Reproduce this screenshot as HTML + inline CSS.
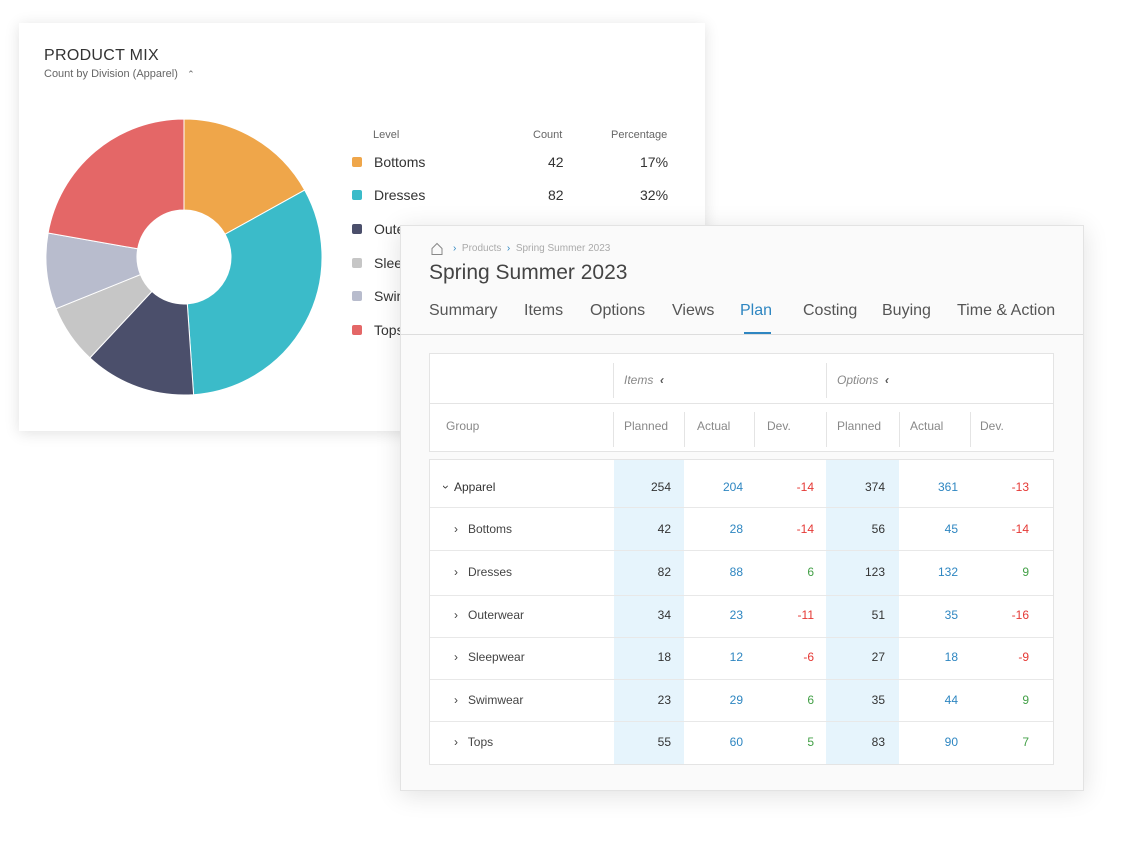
<!DOCTYPE html>
<html><head><meta charset="utf-8"><style>
*{box-sizing:border-box;margin:0;padding:0}
body{width:1146px;height:854px;background:#fff;font-family:"Liberation Sans",sans-serif;position:relative;overflow:hidden;color:#444}
.card1{position:absolute;left:19px;top:23px;width:686px;height:408px;background:#fff;box-shadow:0 2px 14px rgba(0,0,0,.12)}
.abs{position:absolute;white-space:nowrap}
.panel{position:absolute;left:400px;top:225px;width:684px;height:566px;background:#fafafa;border:1px solid #e3e3e3;box-shadow:0 4px 24px rgba(0,0,0,.12)}
.tab{position:absolute;top:76px;font-size:16px;color:#555}
.hdr{position:absolute;left:28px;top:127px;width:625px;height:99px;background:#fff;border:1px solid #e4e4e4}
.body{position:absolute;left:28px;top:233px;width:625px;height:306px;background:#fff;border:1px solid #e4e4e4}
.vl{position:absolute;width:1px;background:#e4e4e4}
.hc{position:absolute;font-size:12px;color:#888}
.row{position:absolute;left:0;width:623px;border-top:1px solid #e8e8e8}
.num{position:absolute;font-size:12px;text-align:right;width:60px}
.p{color:#333}.a{color:#2e86c1}.n{color:#e53935}.g{color:#43a047}
.lbl{position:absolute;font-size:12px;color:#444}
</style></head><body>
<div class="card1">
 <div class="abs" style="left:25px;top:24px;font-size:16px;color:#333;letter-spacing:.3px">PRODUCT MIX</div>
 <div class="abs" style="left:25px;top:45px;font-size:11px;color:#666">Count by Division (Apparel) &nbsp;&nbsp;<span style="font-size:9px">⌃</span></div>
 <svg class="abs" style="left:-19px;top:-23px" width="340" height="420">
  <g stroke="#fff" stroke-width="1">
  <path d="M184 119 A138 138 0 0 1 304.7 190.1 L225.1 234.2 A47 47 0 0 0 184 210Z" fill="#efa64a"/>
  <path d="M304.7 190.1 A138 138 0 0 1 193.6 394.7 L187.3 303.9 A47 47 0 0 0 225.1 234.2Z" fill="#3bbbc9"/>
  <path d="M193.6 394.7 A138 138 0 0 1 89.9 357.9 L151.9 291.4 A47 47 0 0 0 187.3 303.9Z" fill="#4b4f6b"/>
  <path d="M89.9 357.9 A138 138 0 0 1 56 308.7 L140.4 274.6 A47 47 0 0 0 151.9 291.4Z" fill="#c6c6c6"/>
  <path d="M56 308.7 A138 138 0 0 1 48.1 233 L137.7 248.8 A47 47 0 0 0 140.4 274.6Z" fill="#b8bccd"/>
  <path d="M48.1 233 A138 138 0 0 1 184 119 L184 210 A47 47 0 0 0 137.7 248.8Z" fill="#e46767"/>
  </g>
 </svg>
 <div class="abs" style="left:354px;top:106px;font-size:11px;color:#666">Level</div>
 <div class="abs" style="left:514px;top:106px;font-size:11px;color:#666">Count</div>
 <div class="abs" style="left:592px;top:106px;font-size:11px;color:#666">Percentage</div>
 <div class="abs" style="left:333px;top:134px;width:10px;height:10px;background:#efa64a;border-radius:2px"></div>
 <div class="abs" style="left:355px;top:131px;font-size:14px;color:#333">Bottoms</div>
 <div class="abs" style="left:529px;top:131px;font-size:14px;color:#333">42</div>
 <div class="abs" style="left:621px;top:131px;font-size:14px;color:#333">17%</div>
 <div class="abs" style="left:333px;top:167px;width:10px;height:10px;background:#3bbbc9;border-radius:2px"></div>
 <div class="abs" style="left:355px;top:164px;font-size:14px;color:#333">Dresses</div>
 <div class="abs" style="left:529px;top:164px;font-size:14px;color:#333">82</div>
 <div class="abs" style="left:621px;top:164px;font-size:14px;color:#333">32%</div>
 <div class="abs" style="left:333px;top:201px;width:10px;height:10px;background:#4b4f6b;border-radius:2px"></div>
 <div class="abs" style="left:355px;top:198px;font-size:14px;color:#333">Outerwear</div>
 <div class="abs" style="left:333px;top:235px;width:10px;height:10px;background:#c6c6c6;border-radius:2px"></div>
 <div class="abs" style="left:355px;top:232px;font-size:14px;color:#333">Sleepwear</div>
 <div class="abs" style="left:333px;top:268px;width:10px;height:10px;background:#b8bccd;border-radius:2px"></div>
 <div class="abs" style="left:355px;top:265px;font-size:14px;color:#333">Swimwear</div>
 <div class="abs" style="left:333px;top:302px;width:10px;height:10px;background:#e46767;border-radius:2px"></div>
 <div class="abs" style="left:355px;top:299px;font-size:14px;color:#333">Tops</div>
</div>

<div class="panel">
 <svg class="abs" style="left:29px;top:16px" width="14" height="14" viewBox="0 0 14 14"><path d="M2 6.5 L7 1.5 L12 6.5 V12.5 H2Z" fill="none" stroke="#888" stroke-width="1"/></svg>
 <div class="abs" style="left:52px;top:17px;font-size:10px;color:#aaa"><span style="color:#2e86c1">›</span>&nbsp; Products &nbsp;<span style="color:#2e86c1">›</span>&nbsp; Spring Summer 2023</div>
 <div class="abs" style="left:28px;top:35px;font-size:21px;color:#444">Spring Summer 2023</div>
 <div class="tab" style="left:28px">Summary</div>
 <div class="tab" style="left:123px">Items</div>
 <div class="tab" style="left:189px">Options</div>
 <div class="tab" style="left:271px">Views</div>
 <div class="tab" style="left:339px;color:#2e86c1">Plan</div>
 <div class="tab" style="left:402px">Costing</div>
 <div class="tab" style="left:481px">Buying</div>
 <div class="tab" style="left:556px">Time &amp; Action</div>
 <div class="abs" style="left:343px;top:106px;width:27px;height:3px;background:#2e86c1"></div>
 <div class="abs" style="left:0;top:108px;width:682px;height:1px;background:#ddd"></div>

 <div class="hdr">
  <div class="abs" style="left:0;top:49px;width:623px;height:1px;background:#e4e4e4"></div>
  <div class="vl" style="left:183px;top:9px;height:35px"></div>
  <div class="vl" style="left:396px;top:9px;height:35px"></div>
  <div class="hc" style="left:194px;top:19px;font-style:italic">Items &nbsp;<b style="color:#555">‹</b></div>
  <div class="hc" style="left:407px;top:19px;font-style:italic">Options &nbsp;<b style="color:#555">‹</b></div>
  <div class="vl" style="left:183px;top:58px;height:35px"></div>
  <div class="vl" style="left:254px;top:58px;height:35px"></div>
  <div class="vl" style="left:324px;top:58px;height:35px"></div>
  <div class="vl" style="left:396px;top:58px;height:35px"></div>
  <div class="vl" style="left:469px;top:58px;height:35px"></div>
  <div class="vl" style="left:540px;top:58px;height:35px"></div>
  <div class="hc" style="left:16px;top:65px">Group</div>
  <div class="hc" style="left:194px;top:65px">Planned</div>
  <div class="hc" style="left:267px;top:65px">Actual</div>
  <div class="hc" style="left:337px;top:65px">Dev.</div>
  <div class="hc" style="left:407px;top:65px">Planned</div>
  <div class="hc" style="left:480px;top:65px">Actual</div>
  <div class="hc" style="left:550px;top:65px">Dev.</div>
 </div>

 <div class="body">
  <div class="abs" style="left:184px;top:0;width:70px;height:304px;background:#e6f4fc"></div>
  <div class="abs" style="left:396px;top:0;width:73px;height:304px;background:#e6f4fc"></div>
  <div class="lbl" style="left:14px;top:20px;color:#333"><span style="display:inline-block;transform:rotate(90deg);margin-right:6px">›</span>Apparel</div>
  <div class="num p" style="left:181px;top:20px">254</div><div class="num a" style="left:253px;top:20px">204</div><div class="num n" style="left:324px;top:20px">-14</div>
  <div class="num p" style="left:395px;top:20px">374</div><div class="num a" style="left:468px;top:20px">361</div><div class="num n" style="left:539px;top:20px">-13</div>

  <div class="row" style="top:47px"></div>
  <div class="lbl" style="left:24px;top:62px">›&nbsp;&nbsp; Bottoms</div>
  <div class="num p" style="left:181px;top:62px">42</div><div class="num a" style="left:253px;top:62px">28</div><div class="num n" style="left:324px;top:62px">-14</div>
  <div class="num p" style="left:395px;top:62px">56</div><div class="num a" style="left:468px;top:62px">45</div><div class="num n" style="left:539px;top:62px">-14</div>

  <div class="row" style="top:90px"></div>
  <div class="lbl" style="left:24px;top:105px">›&nbsp;&nbsp; Dresses</div>
  <div class="num p" style="left:181px;top:105px">82</div><div class="num a" style="left:253px;top:105px">88</div><div class="num g" style="left:324px;top:105px">6</div>
  <div class="num p" style="left:395px;top:105px">123</div><div class="num a" style="left:468px;top:105px">132</div><div class="num g" style="left:539px;top:105px">9</div>

  <div class="row" style="top:135px"></div>
  <div class="lbl" style="left:24px;top:148px">›&nbsp;&nbsp; Outerwear</div>
  <div class="num p" style="left:181px;top:148px">34</div><div class="num a" style="left:253px;top:148px">23</div><div class="num n" style="left:324px;top:148px">-11</div>
  <div class="num p" style="left:395px;top:148px">51</div><div class="num a" style="left:468px;top:148px">35</div><div class="num n" style="left:539px;top:148px">-16</div>

  <div class="row" style="top:177px"></div>
  <div class="lbl" style="left:24px;top:190px">›&nbsp;&nbsp; Sleepwear</div>
  <div class="num p" style="left:181px;top:190px">18</div><div class="num a" style="left:253px;top:190px">12</div><div class="num n" style="left:324px;top:190px">-6</div>
  <div class="num p" style="left:395px;top:190px">27</div><div class="num a" style="left:468px;top:190px">18</div><div class="num n" style="left:539px;top:190px">-9</div>

  <div class="row" style="top:219px"></div>
  <div class="lbl" style="left:24px;top:233px">›&nbsp;&nbsp; Swimwear</div>
  <div class="num p" style="left:181px;top:233px">23</div><div class="num a" style="left:253px;top:233px">29</div><div class="num g" style="left:324px;top:233px">6</div>
  <div class="num p" style="left:395px;top:233px">35</div><div class="num a" style="left:468px;top:233px">44</div><div class="num g" style="left:539px;top:233px">9</div>

  <div class="row" style="top:261px"></div>
  <div class="lbl" style="left:24px;top:275px">›&nbsp;&nbsp; Tops</div>
  <div class="num p" style="left:181px;top:275px">55</div><div class="num a" style="left:253px;top:275px">60</div><div class="num g" style="left:324px;top:275px">5</div>
  <div class="num p" style="left:395px;top:275px">83</div><div class="num a" style="left:468px;top:275px">90</div><div class="num g" style="left:539px;top:275px">7</div>
 </div>
</div>
</body></html>
